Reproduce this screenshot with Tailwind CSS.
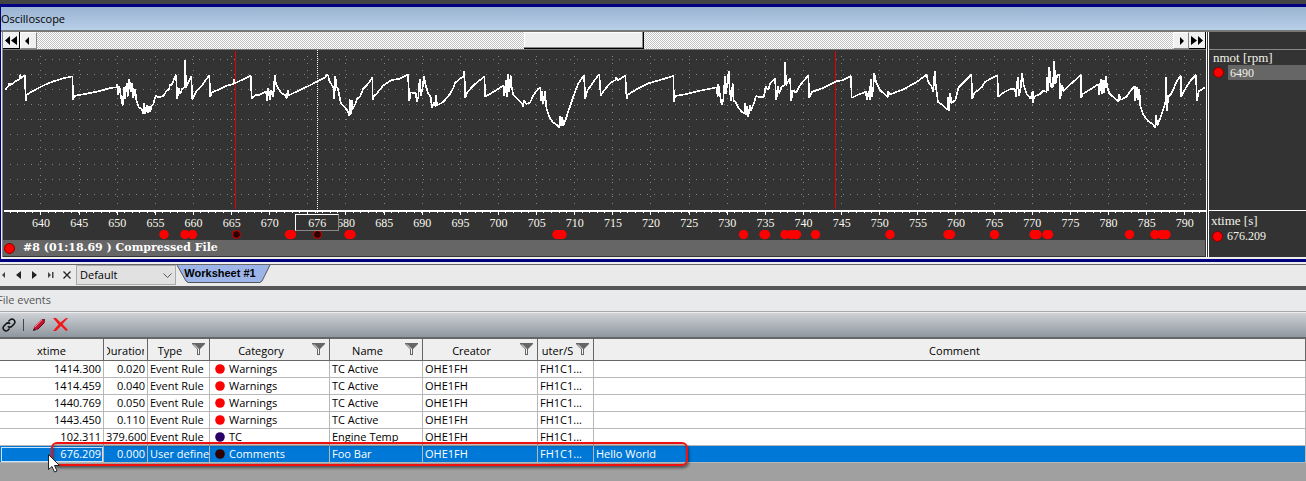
<!DOCTYPE html>
<html lang="en">
<head>
<meta charset="utf-8">
<title>Oscilloscope</title>
<script src="https://cdn.jsdelivr.net/npm/@tailwindcss/browser@4"></script>
</head>
<body class="flex min-h-screen flex-col overflow-x-hidden bg-[#a0a0a0] font-['Open_Sans','Noto_Sans',sans-serif] text-[11px] leading-4 text-black">
<svg class="hidden">
  <symbol id="funnel" viewBox="0 0 13 12"><path d="M0 0H13V1L8 6V12H5V6L0 1Z" fill="#666"/><path d="M2 1.5L6.5 6V11" fill="none" stroke="#f5f5f5" stroke-width="1"/></symbol>
  <symbol id="dot" viewBox="0 0 10 10"><circle cx="5" cy="5" r="4.8" fill="currentColor"/></symbol>
</svg>

<!-- Oscilloscope window -->
<section class="border-t-4 border-[#444]">
  <div class="border-y-[3px] border-l border-[#000080]">
    <header class="h-[25px] border-b-2 border-[#777] bg-linear-to-b from-[#9ab3d1] to-[#b8cfe8] pt-1">
      <h1 class="text-[11px] leading-4">Oscilloscope</h1>
    </header>
    <div class="flex border-b-2 border-l border-[#eee]">
      <div class="min-w-0 flex-1 border-l border-[#888] bg-[#333]">
        <div class="flex h-[18px] border-b border-[#777] [background:conic-gradient(#c4c4c4_25%,#fff_0_50%,#c4c4c4_0_75%,#fff_0)_0_0/2px_2px]">
          <button aria-label="Rewind" class="flex w-[17px] items-center justify-center border-r border-b border-black bg-[#f0f0f0]"><svg class="h-[9px] w-3" viewBox="0 0 12 9"><path d="M5 0V9L0 4.500ZM12 0V9L6 4.500Z"/></svg></button>
          <button aria-label="Step back" class="flex w-[17px] items-center justify-center border border-[#888] border-t-white border-l-white bg-[#f0f0f0] pr-1"><svg class="h-2 w-1" viewBox="0 0 4 8"><path d="M4 0V8L0 4Z"/></svg></button>
          <div class="flex-[487]"></div>
          <button aria-label="Scroll position" class="w-[120px] border-r border-b border-black bg-[#eee] shadow-[inset_-1px_-1px_#888,inset_1px_1px_#fff]"></button>
          <div class="flex-[529]"></div>
          <button aria-label="Step forward" class="flex w-4 items-center justify-center border border-[#888] border-t-white border-l-white bg-[#f0f0f0] pl-0.5"><svg class="h-2 w-1" viewBox="0 0 4 8"><path d="M0 0V8L4 4Z"/></svg></button>
          <button aria-label="Forward" class="flex w-[17px] items-center justify-center border-r border-b border-black bg-[#f0f0f0]"><svg class="h-[9px] w-3" viewBox="0 0 12 9"><path d="M0 0V9L6 4.500ZM7 0V9L12 4.500Z"/></svg></button>
        </div>
        <div class="relative font-['Liberation_Serif',serif] text-xs leading-[14px] text-[#f8f8ee]">
          <svg class="block h-[166px] w-full" viewBox="3 50 1203 166" preserveAspectRatio="none" shape-rendering="crispEdges">
            <path stroke="#858585" stroke-dasharray="1 6" fill="none" d="M10 59.5H1201M10 74.5H1201M10 89.5H1201M10 104.5H1201M10 119.5H1201M10 134.5H1201M10 149.5H1201M10 164.5H1201M10 179.5H1201M10 194.5H1201M40.5 56V204M79.500 56V204M117.500 56V204M155.500 56V204M193.500 56V204M231.500 56V204M269.500 56V204M307.500 56V204M345.500 56V204M384.500 56V204M422.500 56V204M460.500 56V204M498.500 56V204M536.500 56V204M574.500 56V204M612.500 56V204M650.500 56V204M689.500 56V204M727.500 56V204M765.500 56V204M803.500 56V204M841.500 56V204M879.500 56V204M917.500 56V204M955.500 56V204M994.500 56V204M1032.500 56V204M1070.500 56V204M1108.500 56V204M1146.500 56V204M1184.500 56V204"/>
            <path stroke="#e80000" d="M235.500 51V209M835.500 51V209"/>
            <path stroke="#fff" stroke-dasharray="1 1" d="M317.500 50V214"/>
            <path stroke="#fff" stroke-width="2" d="M4 211H1206"/>
            <path stroke="#fff" stroke-dasharray="1 6.627" d="M9.500 212.500H1205"/>
            <path stroke="#fff" d="M40.500 212V215M79.500 212V215M117.500 212V215M155.500 212V215M193.500 212V215M231.500 212V215M269.500 212V215M307.500 212V215M345.500 212V215M384.500 212V215M422.500 212V215M460.500 212V215M498.500 212V215M536.500 212V215M574.500 212V215M612.500 212V215M650.500 212V215M689.500 212V215M727.500 212V215M765.500 212V215M803.500 212V215M841.500 212V215M879.500 212V215M917.500 212V215M955.500 212V215M994.500 212V215M1032.500 212V215M1070.500 212V215M1108.500 212V215M1146.500 212V215M1184.500 212V215"/>
            <g transform="scale(.33333)">
              <path fill="none" stroke="#fff" stroke-width="5" stroke-linejoin="bevel" d="M16 269L26 258 28 250 32 255 45 245 60 236 61 224 64 234 75 226 77 304 80 285 100 272 120 262 140 252 160 244 190 235 217 229 220 300 222 288 260 281 300 273 330 264 350 262 352 252 355 285 358 258 363 292 368 317 372 262 375 297 380 248 383 290 388 236 392 276 397 248 400 294 405 266 409 300 416 322 424 326 430 341 433 310 436 343 440 316 443 340 448 318 451 336 454 318 460 312 467 288 475 292 490 288 500 272 507 268 510 254 515 256 522 238 528 224 532 296 537 264 541 281 547 266 555 262 556 180 558 264 565 246 574 230 577 298 590 272 606 256 628 225 631 292 634 278 660 267 680 257 700 252 701 238 704 250 725 240 752 227 755 295 765 286 780 284 798 275 802 302 805 264 810 300 814 270 820 292 824 226 828 252 833 262 845 280 857 286 860 296 863 270 866 286 900 270 930 256 950 245 976 232 980 224 985 228 987 242 990 246
              L1002 266 1003 296 1006 228 1010 262 1014 266 1022 308 1032 320 1043 332 1048 348 1049 298 1052 344 1056 300 1057 328 1065 314 1072 296 1080 290 1090 266 1100 256 1108 246 1117 232 1118 300 1122 288 1130 281 1150 256 1175 240 1200 236 1224 224 1228 304 1232 277 1248 280 1250 306 1255 292 1259 236 1263 288 1268 262 1272 228 1277 256 1285 282 1292 290 1296 324 1303 306 1307 322 1308 284 1311 316 1330 306 1350 282 1360 264 1366 248 1380 236 1390 230 1393 214 1396 294 1402 276 1425 252 1453 230 1456 290 1490 270 1510 257 1513 288 1518 240 1521 290 1524 222 1528 276 1532 226 1534 258 1540 284 1552 296 1568 312 1568 322 1572 300 1578 312 1590 308 1600 286 1615 266 1621 262 1623 304 1626 272 1630 312 1635 272 1638 312 1640 328 1648 350 1658 366 1672 376 1678 382 1679 348 1682 378 1687 352 1690 378 1696 362 1703 340 1714 308 1722 284 1735 250 1752 226 1756 296 1762 272 1780 246 1798 222 1802 286 1815 268 1830 250 1846 240 1849 232 1853 242 1876 226 1880 298 1883 284 1910 268 1945 250 1980 240
              L2000 234 2020 228 2022 305 2025 288 2060 282 2100 272 2150 262 2153 290 2155 252 2160 285 2165 314 2170 298 2175 228 2178 282 2183 240 2186 212 2189 270 2194 304 2198 250 2201 302 2207 306 2214 322 2225 335 2236 342 2236 310 2239 346 2242 318 2245 350 2250 314 2252 332 2262 310 2268 288 2280 292 2292 290 2297 260 2305 270 2310 250 2325 236 2329 300 2334 258 2338 280 2345 260 2355 254 2356 186 2358 256 2370 234 2374 304 2378 270 2388 278 2400 256 2425 226 2428 294 2435 276 2470 264 2510 244 2530 240 2553 228 2555 294 2575 284 2598 275 2600 300 2606 274 2609 300 2612 238 2616 290 2620 262 2623 218 2628 246 2640 270 2655 284 2663 292 2665 272 2668 284 2710 268 2750 246 2780 224 2784 244 2795 260 2800 276 2804 214 2808 262 2814 306 2826 314 2838 326 2843 330 2844 292 2847 332 2851 278 2854 310 2866 300 2876 262 2890 248 2914 224 2917 298 2922 280 2945 262
              L2955 246 2975 234 2992 226 2995 290 3010 278 3030 268 3045 268 3048 292 3053 232 3057 288 3062 264 3066 218 3071 254 3080 282 3092 296 3098 272 3100 308 3102 290 3120 282 3130 272 3140 276 3142 230 3145 274 3148 202 3153 260 3158 262 3163 184 3166 252 3172 226 3178 222 3181 296 3187 256 3190 274 3210 254 3243 225 3244 294 3248 282 3275 266 3295 252 3298 284 3302 238 3305 282 3310 240 3313 278 3317 228 3322 262 3328 280 3345 296 3356 304 3358 282 3362 300 3380 290 3395 268 3404 258 3406 304 3411 262 3415 300 3418 268 3421 318 3430 344 3445 364 3460 374 3466 384 3468 344 3472 376 3480 356 3490 328 3497 304 3499 232 3501 332 3505 290 3515 280 3528 248 3542 226 3544 290 3555 268 3570 244 3588 224 3591 304 3596 274 3615 262"/>
            </g>
          </svg>
          <div class="flex pr-0.5 pl-[19px] text-center [&>span]:min-w-0 [&>span]:flex-1">
            <span>640</span><span>645</span><span>650</span><span>655</span><span>660</span><span>665</span><span>670</span><span></span><span>680</span><span>685</span><span>690</span><span>695</span><span>700</span><span>705</span><span>710</span><span>715</span><span>720</span><span>725</span><span>730</span><span>735</span><span>740</span><span>745</span><span>750</span><span>755</span><span>760</span><span>765</span><span>770</span><span>775</span><span>780</span><span>785</span><span>790</span>
          </div>
          <div class="absolute top-[164px] left-[24.3%] h-[17px] w-11 border border-[#888] border-t-white border-l-white bg-[#333] pt-px text-center">676</div>
          <svg class="block h-[10px] w-full" viewBox="3 230 1203 10" preserveAspectRatio="none">
            <g fill="#f00"><circle cx="164" cy="234.500" r="4.700"/><circle cx="185" cy="234.500" r="4.700"/><circle cx="192.500" cy="234.500" r="4.700"/><circle cx="289.500" cy="234.500" r="4.700"/><circle cx="291.500" cy="234.500" r="4.700"/><circle cx="349" cy="234.500" r="4.700"/><circle cx="351" cy="234.500" r="4.700"/><circle cx="557" cy="234.500" r="4.700"/><circle cx="559.500" cy="234.500" r="4.700"/><circle cx="562" cy="234.500" r="4.700"/><circle cx="743.500" cy="234.500" r="4.700"/><circle cx="764" cy="234.500" r="4.700"/><circle cx="765.500" cy="234.500" r="4.700"/><circle cx="785" cy="234.500" r="4.700"/><circle cx="791.500" cy="234.500" r="4.700"/><circle cx="796.500" cy="234.500" r="4.700"/><circle cx="815.500" cy="234.500" r="4.700"/><circle cx="890" cy="234.500" r="4.700"/><circle cx="948" cy="234.500" r="4.700"/><circle cx="950.500" cy="234.500" r="4.700"/><circle cx="994.500" cy="234.500" r="4.700"/><circle cx="1034" cy="234.500" r="4.700"/><circle cx="1037" cy="234.500" r="4.700"/><circle cx="1047" cy="234.500" r="4.700"/><circle cx="1048.500" cy="234.500" r="4.700"/><circle cx="1129.500" cy="234.500" r="4.700"/><circle cx="1155" cy="234.500" r="4.700"/><circle cx="1162" cy="234.500" r="4.700"/><circle cx="1166" cy="234.500" r="4.700"/></g>
            <g fill="#300000" stroke="#e00000"><circle cx="236.500" cy="234.500" r="4"/><circle cx="317.500" cy="234.500" r="4"/></g>
          </svg>
        </div>
        <div class="mr-px mb-px flex h-4 items-center gap-2 bg-[#666] font-['DejaVu_Serif',serif] text-[11px] font-bold text-white">
          <svg class="ml-px h-[11px] w-[11px]" viewBox="0 0 11 11"><circle cx="5.500" cy="5.500" r="5" fill="#f00" stroke="#800000"/></svg>
          <span class="whitespace-pre">#8 (01:18.69 ) Compressed File</span>
        </div>
      </div>
      <aside class="flex w-[100px] flex-col border-l-3 border-double border-white bg-[#333] font-['Liberation_Serif',serif] text-[13px] leading-[14px] text-[#f4f4e8]">
        <div class="h-[18px] border-b border-[#888]"></div>
        <div class="flex-1 pt-px">
          <div class="pl-1">nmot [rpm]</div>
          <div class="flex items-center gap-1 pl-1"><svg class="h-[11px] w-[11px]" viewBox="0 0 11 11"><circle cx="5.500" cy="5.500" r="5" fill="#f00" stroke="#800000"/></svg><span class="h-[15px] flex-1 bg-[#666] pl-0.5 text-xs leading-4">6490</span></div>
        </div>
        <div class="h-[47px] border-t border-white pt-[3px]">
          <div class="pl-0.5">xtime [s]</div>
          <div class="flex items-center gap-1 pl-[3px] text-xs"><svg class="h-[11px] w-[11px]" viewBox="0 0 11 11"><circle cx="5.500" cy="5.500" r="5" fill="#f00" stroke="#800000"/></svg><span class="leading-4">676.209</span></div>
        </div>
      </aside>
    </div>
  </div>
</section>

<!-- Worksheet navigation -->
<nav class="flex h-[28px] items-start border-t-2 border-b-4 border-t-[#eee] border-b-[#555] bg-[#eaeaea]">
  <div class="flex h-full w-full items-start border-t border-[#666]">
    <div class="flex h-[19px] w-[76px] items-center [&>button]:flex [&>button]:w-4 [&>button]:justify-center">
      <button aria-label="First worksheet" class="-ml-[5px]"><svg class="h-2 w-2" viewBox="0 0 8 8"><path d="M6 1V7L3 4Z" fill="#444"/></svg></button>
      <button aria-label="Previous worksheet"><svg class="h-2 w-2" viewBox="0 0 8 8"><path d="M6 0V8L1 4Z" fill="#222"/></svg></button>
      <button aria-label="Next worksheet"><svg class="h-2 w-2" viewBox="0 0 8 8"><path d="M1 0V8L6 4Z" fill="#222"/></svg></button>
      <button aria-label="Last worksheet"><svg class="h-2 w-2" viewBox="0 0 8 8"><path d="M1 1V7L4 4ZM5 1H6.500V7H5Z" fill="#444"/></svg></button>
      <button aria-label="Close worksheet"><svg class="h-2 w-2" viewBox="0 0 8 8"><path d="M.5.5L7.500 7.500M7.500.5L.5 7.500" stroke="#222" stroke-width="1.300"/></svg></button>
    </div>
    <div class="relative w-[100px]">
      <select aria-label="Worksheet layout" class="h-5 w-full appearance-none border border-[#aaa] bg-[#e1e1e1] pl-[3px] text-[11px]"><option>Default</option></select>
      <svg class="pointer-events-none absolute top-2 right-1 h-[5px] w-[9px]" viewBox="0 0 9 5"><path d="M.5.5L4.500 4.500 8.500.5" fill="none" stroke="#555"/></svg>
    </div>
    <button class="relative h-[18px] w-[96px] font-['Liberation_Sans',sans-serif] font-bold">
      <svg class="absolute inset-0 h-full w-full" viewBox="0 0 96 18"><path d="M1 0L10 16L12 17.500H84L86 16L94 0" fill="#9cb4e8" stroke="#555"/></svg>
      <span class="relative block pr-2 pb-0.5 leading-4">Worksheet #1</span>
    </button>
  </div>
</nav>

<!-- File events panel -->
<section class="relative">
  <h2 class="h-[22px] border-b border-[#aaa] bg-[#e9eaeb] pt-0.5 text-[#555]"><span class="-ml-[3px]">File events</span></h2>
  <div class="flex h-[27px] items-center border-t border-b-2 border-t-[#eee] border-b-[#666] bg-linear-to-b from-[#cfd2d7] to-[#8f979f] pb-px">
    <button aria-label="Link" class="ml-0.5"><svg class="block h-[14px] w-[14px]" viewBox="0 0 24 24" fill="none" stroke="#111" stroke-width="2.600"><path d="M10 14a5 5 0 0 0 7 0l4-4a5 5 0 0 0-7-7l-3 3"/><path d="M14 10a5 5 0 0 0-7 0l-4 4a5 5 0 0 0 7 7l3-3"/></svg></button>
    <span class="mr-2 ml-[7px] h-3 w-px bg-[#444]"></span>
    <button aria-label="Edit"><svg class="block h-[14px] w-[14px]" viewBox="0 0 14 14"><path d="M1 13L2.500 8.500 9.500 1.500 12 1 13 2 12.500 4.500 5.500 11.500Z" fill="#c41230"/><path d="M3 9L10 2" stroke="#f08090"/><path d="M5.500 11.500L12.500 4.500" stroke="#600"/><path d="M1 13L2 10 4 12Z" fill="#222"/><path d="M10 1L13 1 13 4Z" fill="#722"/></svg></button>
    <button aria-label="Delete" class="ml-[7px]"><svg class="block h-[13px] w-[15px]" viewBox="0 0 15 13"><path d="M0 0H3L7.500 4.500 13 0 15 0 9.500 6 15 12 13 13 8 8 3 13 0 13 5.500 6.500Z" fill="#f01818"/></svg></button>
  </div>
  <table class="w-full table-fixed border-separate border-spacing-0 bg-white [&_td]:h-[17px] [&_td]:overflow-hidden [&_td]:border-r [&_td]:border-b [&_td]:border-[#b8b8b8] [&_td]:p-0 [&_td]:px-0.5 [&_td]:leading-4 [&_td]:whitespace-nowrap [&_th]:h-[22px] [&_th]:overflow-hidden [&_th]:border-r [&_th]:border-b [&_th]:border-[#666] [&_th]:bg-[#efefef] [&_th]:p-0 [&_th]:pt-0.5 [&_th]:font-normal [&_th]:whitespace-nowrap [&_th_svg]:mb-1">
    <colgroup><col class="w-[104px]"><col class="w-[44px]"><col class="w-[62px]"><col class="w-[120px]"><col class="w-[93px]"><col class="w-[115px]"><col class="w-[56px]"><col></colgroup>
    <thead><tr>
      <th scope="col">xtime</th>
      <th scope="col"><div class="mx-[3px] flex justify-center overflow-hidden"><span>Duration</span></div></th>
      <th scope="col"><div class="flex items-center pr-1"><span class="flex-1">Type</span><svg class="h-3 w-[13px]"><use href="#funnel"/></svg></div></th>
      <th scope="col"><div class="flex items-center pr-1"><span class="flex-1">Category</span><svg class="h-3 w-[13px]"><use href="#funnel"/></svg></div></th>
      <th scope="col"><div class="flex items-center pr-1"><span class="flex-1">Name</span><svg class="h-3 w-[13px]"><use href="#funnel"/></svg></div></th>
      <th scope="col"><div class="flex items-center pr-1"><span class="flex-1">Creator</span><svg class="h-3 w-[13px]"><use href="#funnel"/></svg></div></th>
      <th scope="col"><div class="flex items-center gap-[3px] pr-1 pl-1"><span class="flex min-w-0 flex-1 justify-center overflow-hidden">uter/S</span><svg class="h-3 w-[13px] shrink-0"><use href="#funnel"/></svg></div></th>
      <th scope="col"><div class="pl-[10px]">Comment</div></th>
    </tr></thead>
    <tbody>
      <tr><td class="text-right">1414.300</td><td class="text-right">0.020</td><td>Event Rule</td><td><div class="flex items-center gap-1 pl-[3px]"><svg class="h-[10px] w-[10px] text-[#f00]"><use href="#dot"/></svg>Warnings</div></td><td>TC Active</td><td>OHE1FH</td><td>FH1C1...</td><td></td></tr>
      <tr><td class="text-right">1414.459</td><td class="text-right">0.040</td><td>Event Rule</td><td><div class="flex items-center gap-1 pl-[3px]"><svg class="h-[10px] w-[10px] text-[#f00]"><use href="#dot"/></svg>Warnings</div></td><td>TC Active</td><td>OHE1FH</td><td>FH1C1...</td><td></td></tr>
      <tr><td class="text-right">1440.769</td><td class="text-right">0.050</td><td>Event Rule</td><td><div class="flex items-center gap-1 pl-[3px]"><svg class="h-[10px] w-[10px] text-[#f00]"><use href="#dot"/></svg>Warnings</div></td><td>TC Active</td><td>OHE1FH</td><td>FH1C1...</td><td></td></tr>
      <tr><td class="text-right">1443.450</td><td class="text-right">0.110</td><td>Event Rule</td><td><div class="flex items-center gap-1 pl-[3px]"><svg class="h-[10px] w-[10px] text-[#f00]"><use href="#dot"/></svg>Warnings</div></td><td>TC Active</td><td>OHE1FH</td><td>FH1C1...</td><td></td></tr>
      <tr><td class="text-right">102.311</td><td class="text-right">379.600</td><td>Event Rule</td><td><div class="flex items-center gap-1 pl-[3px]"><svg class="h-[10px] w-[10px] text-[#2a0066]"><use href="#dot"/></svg>TC</div></td><td>Engine Temp</td><td>OHE1FH</td><td>FH1C1...</td><td></td></tr>
      <tr class="bg-[#0078d7] text-white"><td class="text-right outline outline-offset-[-2px] outline-white/80">676.209</td><td class="text-right">0.000</td><td>User define</td><td><div class="flex items-center gap-1 pl-[3px]"><svg class="h-[10px] w-[10px] text-[#300000]"><use href="#dot"/></svg>Comments</div></td><td>Foo Bar</td><td>OHE1FH</td><td>FH1C1...</td><td>Hello World</td></tr>
    </tbody>
  </table>
  <div class="pointer-events-none absolute -bottom-[3px] left-[51px] h-6 w-[637px] rounded-md border-2 border-[#f01010] shadow-[1px_2px_3px_rgba(0,0,0,0.5),inset_1px_2px_3px_rgba(0,0,0,0.3)]"></div>
  <svg class="absolute -bottom-[10px] left-12 h-[19px] w-3" viewBox="0 0 12 19"><path d="M.5.500V15.500L4 12.500 6.500 18 9 17 6.500 11.500H11.500Z" fill="#fff" stroke="#222"/></svg>
</section>
</body>
</html>
